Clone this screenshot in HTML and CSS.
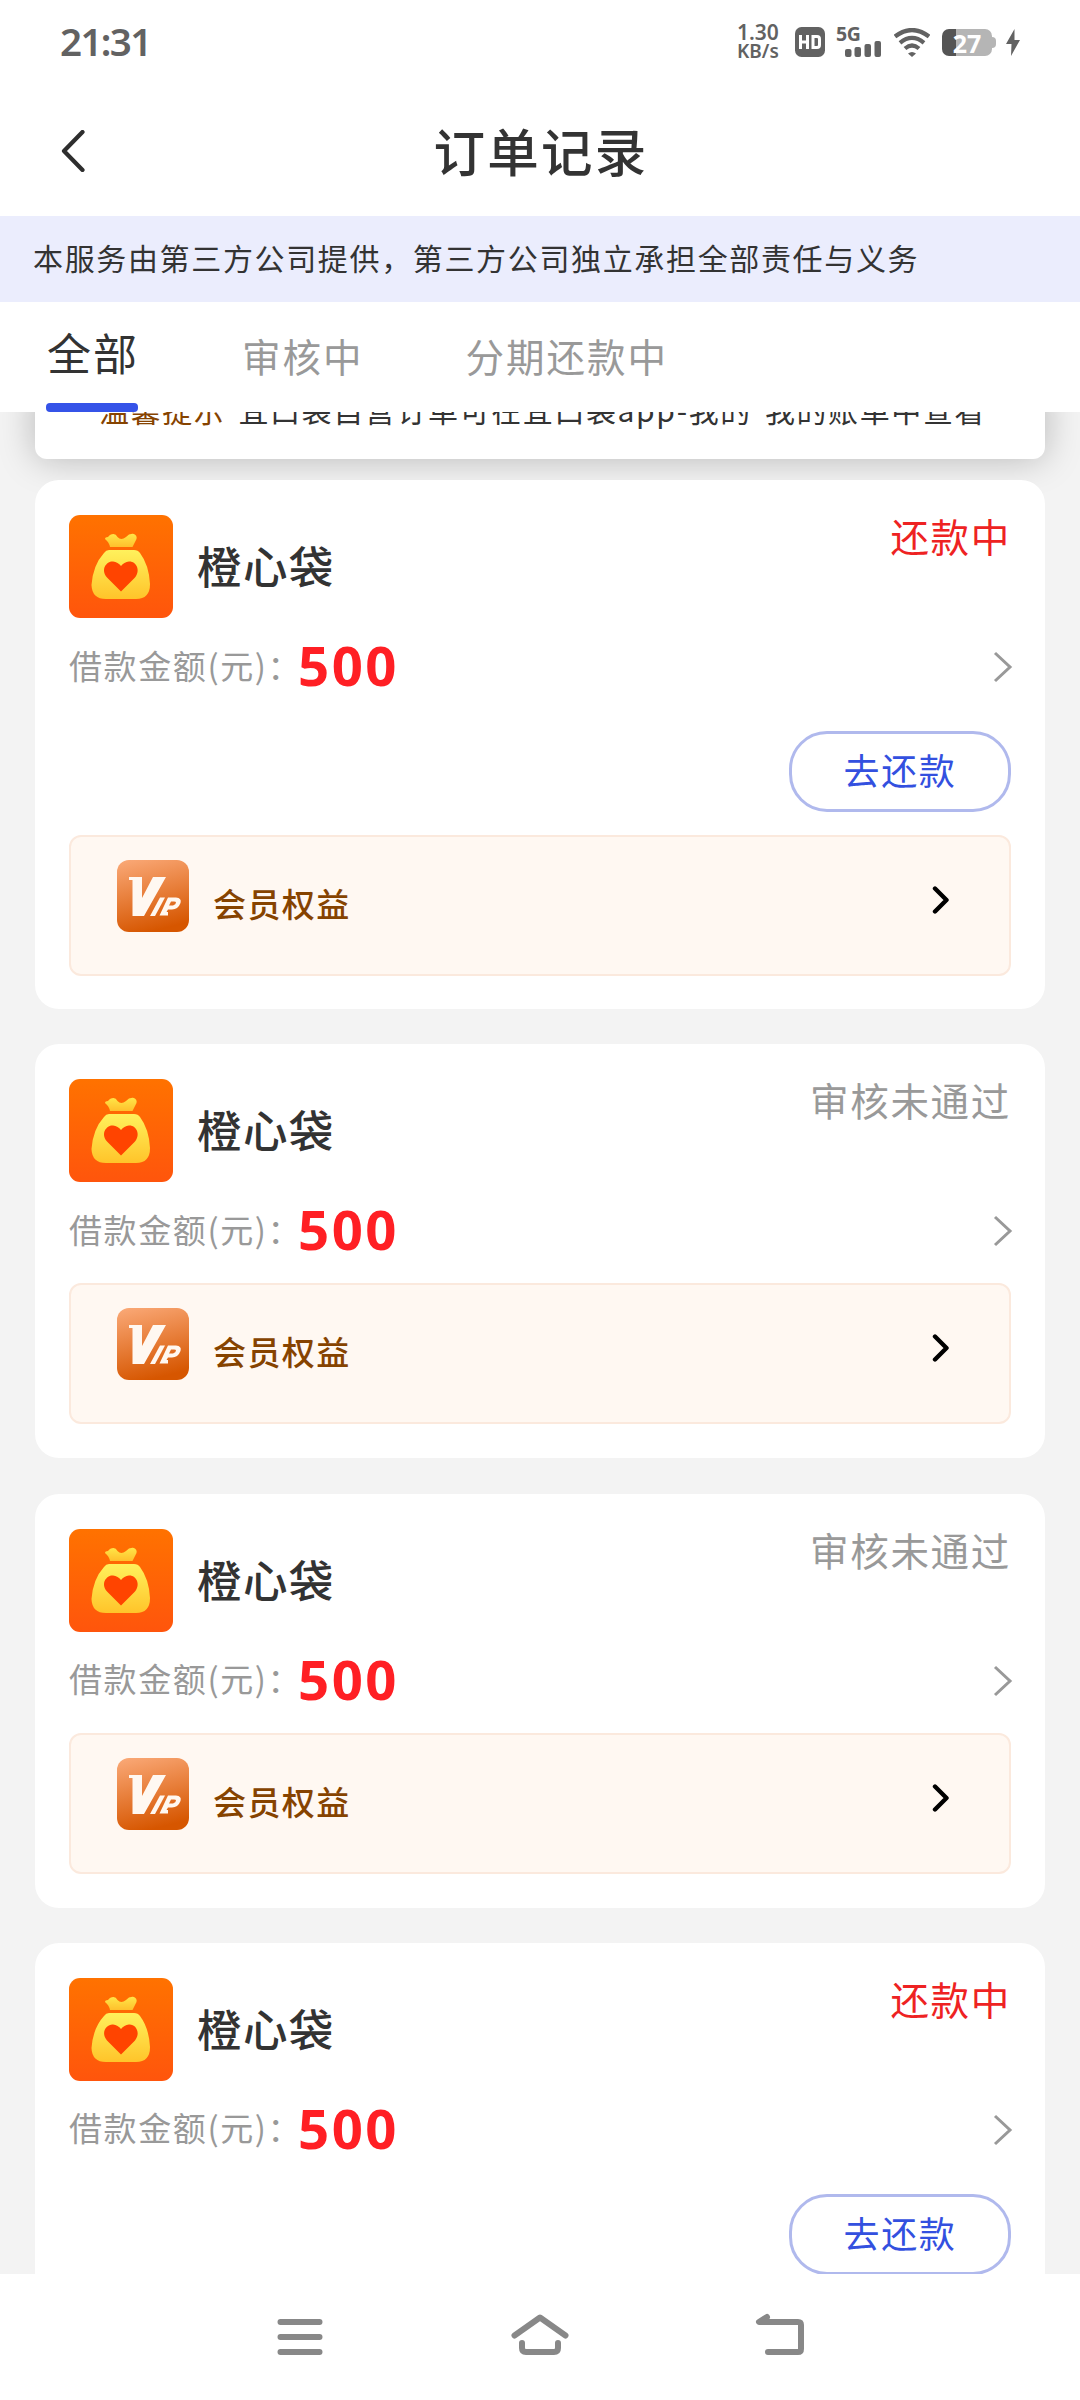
FILE: index.html
```html
<!DOCTYPE html>
<html lang="zh-CN">
<head>
<meta charset="utf-8">
<title>订单记录</title>
<link rel="stylesheet" href="styles.css">
</head>
<body>
<svg class="defs" width="0" height="0" aria-hidden="true">
  <defs>
    <linearGradient id="g-logo" x1="0" y1="0" x2="0" y2="1"><stop offset="0" stop-color="#ff7200"/><stop offset="1" stop-color="#ff550c"/></linearGradient>
    <linearGradient id="g-bag" x1="0" y1="0" x2="0" y2="1"><stop offset="0" stop-color="#fff15c"/><stop offset="1" stop-color="#ffc42a"/></linearGradient>
    <linearGradient id="g-neck" x1="0" y1="0" x2="0" y2="1"><stop offset="0" stop-color="#ffe648"/><stop offset="1" stop-color="#ffc02c"/></linearGradient>
    <linearGradient id="g-vip" x1="0.2" y1="0" x2="0.45" y2="1"><stop offset="0" stop-color="#f9a673"/><stop offset="1" stop-color="#d65600"/></linearGradient>
  </defs>
  <symbol id="logo" viewBox="0 0 104 103">
    <rect width="104" height="103" rx="11" fill="url(#g-logo)"/>
    <path d="M36 24Q36 22 39 22Q41 19 44.500 19Q47 19 48.500 22Q52 26 57 22Q60 18.500 64 18.800Q68.500 20 67.500 24Q65.500 28 63.500 32H41Q40 27 36 24Z" fill="url(#g-neck)"/>
    <path d="M40 35H65Q69 35 71 38Q80 50 81 69Q81 84 67 84H37Q23 84 22.500 70Q24 50 35 38Q37 35 40 35Z" fill="url(#g-bag)"/>
    <path d="M52 76.500L38 62.500C31 54 38 46 44 46.500Q49 47 52 51Q55 47 60 46.500C67 46 72 55 66 62.500Z" fill="#ff4400"/>
  </symbol>
  <symbol id="vip" viewBox="0 0 72 72">
    <rect width="72" height="72" rx="12" fill="url(#g-vip)"/>
    <path d="M12 17H25V38L36 17H49L27 56H15.500V20H12Z" fill="#fff8f1"/>
    <path d="M43 37.500H48L38 56H33Z" fill="#fff8f1"/>
    <path d="M51 37.500H59Q65 38 63.500 43Q61 49.500 55 49.500H51L49.500 52H51V55.500H42.500ZM54 41.500L52 45.500H56Q59 44.500 59 42.500Q59 41.500 57 41.500Z" fill="#fff8f1" fill-rule="evenodd"/>
  </symbol>
</svg>
<div class="screen">
  <header class="status">
    <span class="clock">21:31</span>
    <div class="indicators">
      <div class="speed"><span class="rate">1.30</span><span class="unit">KB/s</span></div>
      <svg class="hd" width="30" height="30" viewBox="0 0 30 30"><rect width="30" height="30" rx="6.500" fill="#626262"/><path d="M5.500 8V22M12.500 8V22M5.500 15H12.500M18 9.500H22Q24.500 9.500 24.500 12V18Q24.500 20.500 22 20.500H18Z" fill="none" stroke="#fff" stroke-width="3"/></svg>
      <div class="signal"><span class="gen">5G</span><svg width="36" height="16" viewBox="0 0 36 16" fill="#626262"><rect x="0" y="8" width="6.500" height="8" rx="2"/><rect x="9.500" y="6" width="6.500" height="10" rx="2"/><rect x="19.500" y="3" width="6.500" height="13" rx="2"/><rect x="29.500" y="0" width="6.500" height="16" rx="2"/></svg></div>
      <svg class="wifi" width="36" height="29" viewBox="0 0 36 29"><g fill="none" stroke="#626262" stroke-width="4.200"><path d="M1 8.500Q18 -4.500 35 8.500"/><path d="M6 14.800Q18 5 30 14.800"/><path d="M11 20.500Q18 14.500 25 20.500"/></g><path d="M14 25.500Q18 22.500 22 25.500L18 29Z" fill="#626262"/></svg>
      <div class="battery"><span class="charge">27</span></div>
      <svg class="bolt" width="14" height="27" viewBox="0 0 14 27"><path d="M8.500 0L0 15H5.500L5 27L14 11H8.500Z" fill="#626262"/></svg>
    </div>
  </header>
  <nav class="titlebar">
    <svg class="back" width="24" height="42" viewBox="0 0 24 42"><path d="M21.500 2L3 21L21.500 40" fill="none" stroke="#2e2e2e" stroke-width="4.200" stroke-linecap="round" stroke-linejoin="round"/></svg>
    <h1>订单记录</h1>
  </nav>
  <p class="notice">本服务由第三方公司提供，第三方公司独立承担全部责任与义务</p>
  <div class="tabs">
    <span class="tab active">全部</span>
    <span class="tab">审核中</span>
    <span class="tab">分期还款中</span>
  </div>
  <main class="list">
    <div class="tip"><p><b>温馨提示</b><span>宜口袋自营订单可在宜口袋app-我的</span><span>我的账单中查看</span></p></div>

    <article class="card">
      <div class="head"><svg class="logo"><use href="#logo"/></svg><h2>橙心袋</h2><span class="state due">还款中</span></div>
      <div class="amount"><span class="label">借款金额(元)：</span><strong>500</strong><svg class="more" width="20" height="32" viewBox="0 0 20 32"><path d="M2 2L17 16L2 30" fill="none" stroke="#999" stroke-width="3"/></svg></div>
      <div class="action"><button class="repay">去还款</button></div>
      <div class="member"><svg class="vip"><use href="#vip"/></svg><span>会员权益</span><svg class="go" width="18" height="28" viewBox="0 0 18 28"><path d="M3 2.500L14.500 14L3 25.500" fill="none" stroke="#000" stroke-width="4.400" stroke-linecap="round" stroke-linejoin="round"/></svg></div>
    </article>

    <article class="card">
      <div class="head"><svg class="logo"><use href="#logo"/></svg><h2>橙心袋</h2><span class="state">审核未通过</span></div>
      <div class="amount"><span class="label">借款金额(元)：</span><strong>500</strong><svg class="more" width="20" height="32" viewBox="0 0 20 32"><path d="M2 2L17 16L2 30" fill="none" stroke="#999" stroke-width="3"/></svg></div>
      <div class="member"><svg class="vip"><use href="#vip"/></svg><span>会员权益</span><svg class="go" width="18" height="28" viewBox="0 0 18 28"><path d="M3 2.500L14.500 14L3 25.500" fill="none" stroke="#000" stroke-width="4.400" stroke-linecap="round" stroke-linejoin="round"/></svg></div>
    </article>

    <article class="card">
      <div class="head"><svg class="logo"><use href="#logo"/></svg><h2>橙心袋</h2><span class="state">审核未通过</span></div>
      <div class="amount"><span class="label">借款金额(元)：</span><strong>500</strong><svg class="more" width="20" height="32" viewBox="0 0 20 32"><path d="M2 2L17 16L2 30" fill="none" stroke="#999" stroke-width="3"/></svg></div>
      <div class="member"><svg class="vip"><use href="#vip"/></svg><span>会员权益</span><svg class="go" width="18" height="28" viewBox="0 0 18 28"><path d="M3 2.500L14.500 14L3 25.500" fill="none" stroke="#000" stroke-width="4.400" stroke-linecap="round" stroke-linejoin="round"/></svg></div>
    </article>

    <article class="card">
      <div class="head"><svg class="logo"><use href="#logo"/></svg><h2>橙心袋</h2><span class="state due">还款中</span></div>
      <div class="amount"><span class="label">借款金额(元)：</span><strong>500</strong><svg class="more" width="20" height="32" viewBox="0 0 20 32"><path d="M2 2L17 16L2 30" fill="none" stroke="#999" stroke-width="3"/></svg></div>
      <div class="action"><button class="repay">去还款</button></div>
    </article>
  </main>
  <footer class="sysnav">
    <svg width="60" height="48" viewBox="0 0 60 48"><path d="M10.500 12H49.500M10.500 27H49.500M10.500 42H49.500"/></svg>
    <svg width="60" height="48" viewBox="0 0 60 48"><path d="M4.500 25.500L30 7.500L55.500 25.500M12 33V38Q12 42 16 42H44Q48 42 48 38V33"/></svg>
    <svg width="60" height="48" viewBox="0 0 60 48"><path d="M17 7L9 12H48Q51 12 51 15V39Q51 42 48 42H18"/></svg>
  </footer>
</div>
</body>
</html>
```
FILE: styles.css
```css
* { box-sizing: border-box; }
body, h1, h2, p { margin: 0; }
body {
  font-family: "Noto Sans CJK SC", "Noto Sans", sans-serif;
  color: #333;
  background: #fff;
}
.defs { display: block; }
svg { flex: none; display: block; }
.screen {
  width: 1080px;
  height: 2400px;
  display: flex;
  flex-direction: column;
  overflow: hidden;
}

.status {
  flex: none;
  height: 84px;
  display: flex;
  justify-content: space-between;
  padding: 0 60px;
  color: #626262;
}
.clock { font: 600 38.5px/82px "Noto Sans", sans-serif; letter-spacing: -1.6px; }
.indicators { display: flex; height: 84px; align-items: center; }
.speed {
  display: flex;
  flex-direction: column;
  width: 45px;
  font-family: "Noto Sans", sans-serif;
  font-weight: 600;
  line-height: 19px;
}
.rate { font-size: 21px; }
.unit { font-size: 19px; }
.hd { margin-left: 13px; }
.signal { width: 45px; height: 30px; margin-left: 11px; display: flex; flex-direction: column; align-items: flex-end; }
.gen { align-self: flex-start; font: 700 19.5px/14px "Noto Sans", sans-serif; letter-spacing: -.5px; }
.wifi { margin-left: 13px; }
.battery {
  position: relative;
  width: 50px;
  height: 27px;
  margin-left: 12px;
  border-radius: 7px;
  background: linear-gradient(90deg, #555 14px, #b5b5b5 14px);
  text-align: center;
}
.battery::after {
  content: "";
  position: absolute;
  left: 50px;
  top: 8px;
  width: 4px;
  height: 11px;
  border-radius: 0 4px 4px 0;
  background: #b5b5b5;
}
.charge { display: block; font: 700 25px/28px "Noto Sans", sans-serif; color: #fff; }
.bolt { margin-left: 14px; }

.titlebar {
  flex: none;
  height: 132px;
  display: grid;
  grid-template-columns: 100px 1fr 100px;
  align-items: center;
}
.back { margin: 2px 0 0 61px; }
h1 { text-align: center; font-size: 51.5px; line-height: 74px; font-weight: 500; letter-spacing: 2.3px; margin: 0 0 1px 2px; }

.notice {
  flex: none;
  height: 86px;
  padding-left: 33px;
  background: #ebedfd;
  font-size: 30px;
  line-height: 83px;
  letter-spacing: 1.65px;
}
.tabs {
  flex: none;
  height: 110px;
  display: flex;
  padding-left: 46px;
  color: #999;
  white-space: nowrap;
}
.tab { font-size: 38.5px; line-height: 107px; letter-spacing: 2px; margin-right: 102px; }
.tab.active {
  display: flex;
  flex-direction: column;
  justify-content: space-between;
  width: 92px;
  margin-right: 104px;
  padding-left: 1px;
  font-size: 44px;
  line-height: 101px;
  color: #333;
}
.tab.active::after {
  content: "";
  height: 9px;
  margin-left: -1px;
  border-radius: 4px;
  background: #3553e8;
}

.list {
  display: flex;
  flex-direction: column;
  height: 1862px;
  padding: 0 35px;
  background: #f3f3f3;
  overflow: hidden;
}
.tip {
  flex: none;
  height: 71px;
  margin-top: -24px;
  margin-bottom: 21px;
  border-radius: 0 0 12px 12px;
  background: #fff;
  box-shadow: 0 0 36px rgba(0, 0, 0, .25);
}
.tip p { display: flex; padding-left: 64px; font-size: 30px; line-height: 43px; letter-spacing: 1.6px; gap: 13px; white-space: nowrap; }
.tip b { font-weight: 400; color: #864300; }

.card {
  flex: none;
  margin-bottom: 35.3px;
  padding: 35px 34px 34px;
  border-radius: 24px;
  background: #fff;
}
.head { display: flex; height: 104px; }
.logo { width: 104px; height: 103px; }
h2 { margin-left: 24px; font-size: 44.5px; line-height: 99px; font-weight: 500; letter-spacing: 1.4px; }
.state { margin-left: auto; font-size: 38.5px; line-height: 41px; letter-spacing: 1.7px; color: #999; }
.due { color: #ee2222; }
.amount { display: flex; align-items: center; height: 96px; }
.label { margin-top: -5px; color: #999; font-size: 33px; letter-spacing: 1.6px; }
.amount strong { margin: -4px 0 0 -4px; color: #ff1f24; font: 700 54.5px/60px "Noto Sans", sans-serif; letter-spacing: 2.4px; }
.more { margin: 0 -2px 0 auto; }
.action { display: flex; justify-content: flex-end; height: 115px; padding-top: 16px; }
.repay {
  width: 222px;
  height: 81px;
  padding: 0 0 5px;
  border: 3px solid #b0b9ed;
  border-radius: 38px;
  background: #fff;
  color: #3350df;
  font-family: inherit;
  font-size: 36px;
  letter-spacing: 1.7px;
}
.member {
  display: flex;
  height: 141px;
  padding: 23px 59px 0 46px;
  margin-top: 4px;
  border: 2px solid #fbe9dd;
  border-radius: 12px;
  background: #fff8f2;
}
.action + .member { margin: 5px 0 -1px; }
.vip { width: 72px; height: 72px; }
.member span { margin-left: 24px; font-size: 33px; line-height: 86px; font-weight: 500; letter-spacing: 1.4px; color: #864300; }
.go { margin: 26px 0 0 auto; }

.sysnav {
  flex: none;
  height: 126px;
  display: flex;
  justify-content: center;
  gap: 180px;
  padding-top: 36px;
  background: #fff;
}
.sysnav svg { fill: none; stroke: #888; stroke-width: 6; stroke-linecap: round; stroke-linejoin: round; }
```
